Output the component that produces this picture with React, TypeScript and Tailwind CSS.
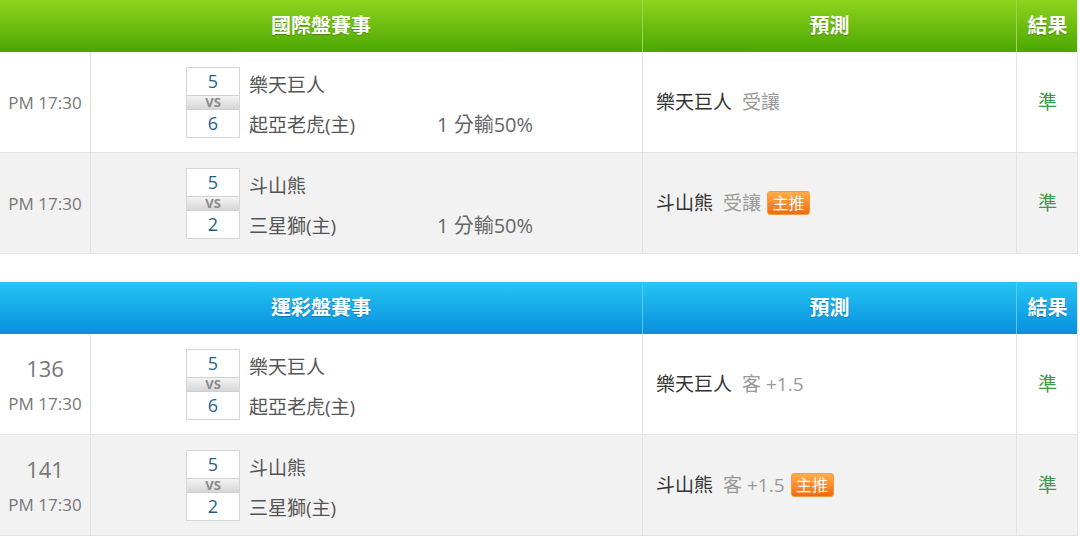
import React from 'react'

type Row = {
  no?: string
  time: string
  home: number
  away: number
  team1: string
  team2: string
  handicap?: string
  pick: string
  pickNote: string
  hot?: boolean
  result: string
}

const intl: Row[] = [
  { time: 'PM 17:30', home: 5, away: 6, team1: '樂天巨人', team2: '起亞老虎(主)', handicap: '1 分輸50%', pick: '樂天巨人', pickNote: '受讓', result: '準' },
  { time: 'PM 17:30', home: 5, away: 2, team1: '斗山熊', team2: '三星獅(主)', handicap: '1 分輸50%', pick: '斗山熊', pickNote: '受讓', hot: true, result: '準' },
]

const sports: Row[] = [
  { no: '136', time: 'PM 17:30', home: 5, away: 6, team1: '樂天巨人', team2: '起亞老虎(主)', pick: '樂天巨人', pickNote: '客 +1.5', result: '準' },
  { no: '141', time: 'PM 17:30', home: 5, away: 2, team1: '斗山熊', team2: '三星獅(主)', pick: '斗山熊', pickNote: '客 +1.5', hot: true, result: '準' },
]

const font = { fontFamily: '"Open Sans", "Noto Sans CJK TC", sans-serif' }

function ScoreBox({ a, b }: { a: number; b: number }) {
  return (
    <div className="w-[54px] flex flex-col border border-[#d6d6d6] bg-white">
      <div className="h-[27px] flex items-center justify-center text-[18px] text-[#1f5f8b] leading-none">{a}</div>
      <div className="h-[15px] flex items-center justify-center text-[13px] font-bold text-[#8a8a8a] leading-none bg-gradient-to-b from-[#f4f4f4] to-[#d6d6d6] border-y border-[#d0d0d0]">
        VS
      </div>
      <div className="h-[27px] flex items-center justify-center text-[18px] text-[#1f5f8b] leading-none">{b}</div>
    </div>
  )
}

function Badge() {
  return (
    <span className="inline-flex items-center justify-center ml-[6px] w-[43px] h-[24px] rounded-[3px] bg-gradient-to-b from-[#ffae4a] to-[#f06a0c] border border-[#f59a3e] text-white text-[16px] leading-none">
      主推
    </span>
  )
}

function Table({ title, rows, blue }: { title: string; rows: Row[]; blue?: boolean }) {
  const head = blue
    ? 'bg-gradient-to-b from-[#26c6f2] to-[#0b8ee0]'
    : 'bg-gradient-to-b from-[#8ed41e] to-[#4aa700]'
  const divider = blue ? 'border-[#5cc8f4]' : 'border-[#9bd65a]'
  return (
    <div className="w-[1078px] border-r border-[#e5e5e5]">
      {/* header */}
      <div className={`grid grid-cols-[642px_374px_62px] h-[52px] text-white font-bold text-[20px] ${head}`} style={{ textShadow: '0 1px 1px rgba(0,0,0,0.25)' }}>
        <div className="flex items-center justify-center">{title}</div>
        <div className={`flex items-center justify-center border-l ${divider}`}>預測</div>
        <div className={`flex items-center justify-center border-l ${divider}`}>結果</div>
      </div>
      {rows.map((r, i) => (
        <div
          key={i}
          className={`grid grid-cols-[90px_552px_374px_62px] h-[101px] border-b border-[#e3e3e3] ${i % 2 ? 'bg-[#f2f2f2]' : 'bg-white'}`}
        >
          <div className="flex flex-col items-center justify-center text-[#777]">
            {r.no && <div className="text-[22px] leading-none mb-[16px]">{r.no}</div>}
            <div className="text-[17px] leading-none">{r.time}</div>
          </div>
          <div className="flex items-center border-l border-[#e3e3e3] pl-[95px]">
            <ScoreBox a={r.home} b={r.away} />
            <div className="flex flex-col justify-between h-[70px] ml-[9px] text-[19px] text-[#555] leading-none pt-[9px] pb-[2px]">
              <div>{r.team1}</div>
              <div className="flex items-baseline">
                <span className="w-[188px]">{r.team2}</span>
                {r.handicap && <span className="text-[#666] text-[20px]">{r.handicap}</span>}
              </div>
            </div>
          </div>
          <div className="flex items-center border-l border-[#e3e3e3] pl-[13px] text-[19px]">
            <span className="text-[#333]">{r.pick}</span>
            <span className="text-[#999] ml-[10px]">{r.pickNote}</span>
            {r.hot && <Badge />}
          </div>
          <div className="flex items-center justify-center border-l border-[#e3e3e3] text-[19px] text-[#3a9a47]">
            {r.result}
          </div>
        </div>
      ))}
    </div>
  )
}

export default function App() {
  return (
    <div className="w-[1080px] h-[536px] bg-white overflow-hidden" style={font}>
      <Table title="國際盤賽事" rows={intl} />
      <div className="h-[28px]" />
      <Table title="運彩盤賽事" rows={sports} blue />
    </div>
  )
}
